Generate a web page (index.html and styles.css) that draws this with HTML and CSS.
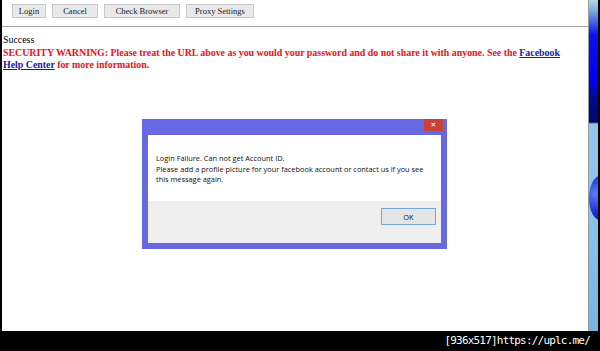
FILE: index.html
```html
<!DOCTYPE html>
<html>
<head>
    <title>Login</title>
    <meta charset="UTF-8">
    <link rel="stylesheet" href="styles.css">
</head>
<body>
    <div class="frame">
        <div class="screen">
            <div class="app">
                <div class="toolbar">
                    <button class="btn btn-login">Login</button>
                    <button class="btn btn-cancel">Cancel</button>
                    <button class="btn btn-check">Check Browser</button>
                    <button class="btn btn-proxy">Proxy Settings</button>
                </div>
                <div class="page">
                    <div class="status">Success</div>
                    <div class="warning">SECURITY WARNING: Please treat the URL above as you would your password and do not share it with anyone. See the <a href="#">Facebook Help Center</a> for more information.</div>
                </div>

                <div class="dialog">
                    <div class="dialog-title">
                        <span class="close">&#x2715;</span>
                    </div>
                    <div class="dialog-body">
                        <p>Login Failure. Can not get Account ID.<br>Please add a profile picture for your facebook account or contact us if you see this message again.</p>
                    </div>
                    <div class="dialog-footer">
                        <button class="ok">OK</button>
                    </div>
                </div>
            </div>
            <div class="desktop">
                <div class="sphere"></div>
            </div>
        </div>
        <div class="caption">[936x517]https://uplc.me/</div>
    </div>
</body>
</html>
```

FILE: styles.css
```css
html, body {
    margin: 0;
    padding: 0;
    background: #000;
}
.frame {
    width: 600px;
    height: 351px;
    display: flex;
    flex-direction: column;
    background: #000;
}
.screen {
    display: flex;
    height: 331px;
    padding: 0 2px 0 2px;
}
.app {
    position: relative;
    width: 586px;
    background: #fff;
    border-right: 1px solid #9a9a9a;
}
.toolbar {
    height: 27px;
    box-sizing: border-box;
    border-bottom: 1px solid #a7a7a7;
    display: flex;
    align-items: flex-start;
    padding: 4px 0 0 10px;
    gap: 6px;
    background: #fff;
}
.btn {
    font-family: "Liberation Serif", serif;
    font-size: 8.5px;
    height: 14px;
    padding: 0;
    background: #e9e9e9;
    border: 1px solid #c9c9c9;
    color: #222;
}
.btn-login { width: 34px; }
.btn-cancel { width: 46px; }
.btn-check { width: 76px; }
.btn-proxy { width: 68px; }
.page {
    font-family: "Liberation Serif", serif;
    font-size: 9.9px;
    line-height: 12.5px;
    padding: 7px 1px 0 1px;
    color: #000;
}
.warning {
    color: #e0161e;
    font-weight: bold;
    padding-right: 8px;
}
.warning a {
    color: #1a1a9c;
    text-decoration: underline;
}
.dialog {
    position: absolute;
    left: 140px;
    top: 119px;
    width: 305px;
    height: 130px;
    box-sizing: border-box;
    background: #6769e2;
    padding: 0 6px 6px 6px;
    display: flex;
    flex-direction: column;
    font-family: "Open Sans", sans-serif;
    font-size: 7.4px;
    color: #111;
}
.dialog-title {
    height: 16px;
    display: flex;
    justify-content: flex-end;
    align-items: flex-start;
}
.close {
    width: 19px;
    height: 12px;
    margin-right: -2px;
    background: #c94238;
    color: #fff;
    font-size: 7px;
    line-height: 12px;
    text-align: center;
    font-family: "DejaVu Sans", sans-serif;
}
.dialog-body {
    background: #fff;
    height: 66px;
    padding: 18px 14px 0 8px;
    box-sizing: border-box;
}
.dialog-body p {
    margin: 0;
    line-height: 10.5px;
}
.dialog-footer {
    flex: 1;
    background: #efefef;
    display: flex;
    justify-content: flex-end;
    align-items: flex-start;
    padding: 7px 5px 0 0;
}
.ok {
    width: 55px;
    height: 17px;
    padding: 0;
    border: 1px solid #6ea9dc;
    background: #e5e5e5;
    font-family: "Open Sans", sans-serif;
    font-size: 7.4px;
    color: #111;
}
.desktop {
    position: relative;
    flex: 1;
    overflow: hidden;
    background: linear-gradient(to bottom, #b9d4e2 0px, #7fb0dc 10px, #0b12e8 35px, #0000f0 80px, #040a8a 100px, #03046a 122px, #8fc7ea 124px, #8cc5ea 200px, #76b4e3 331px);
}
.sphere {
    position: absolute;
    left: 0;
    top: 176px;
    width: 22px;
    height: 44px;
    border-radius: 50%;
    background: radial-gradient(circle at 30% 40%, #5b7cf0, #1d2fd8 60%, #0c1690);
}
.caption {
    height: 20px;
    color: #fff;
    font-family: "DejaVu Sans Mono", monospace;
    font-size: 11px;
    line-height: 20px;
    text-align: right;
    padding-right: 10px;
    letter-spacing: -0.8px;
}
```
